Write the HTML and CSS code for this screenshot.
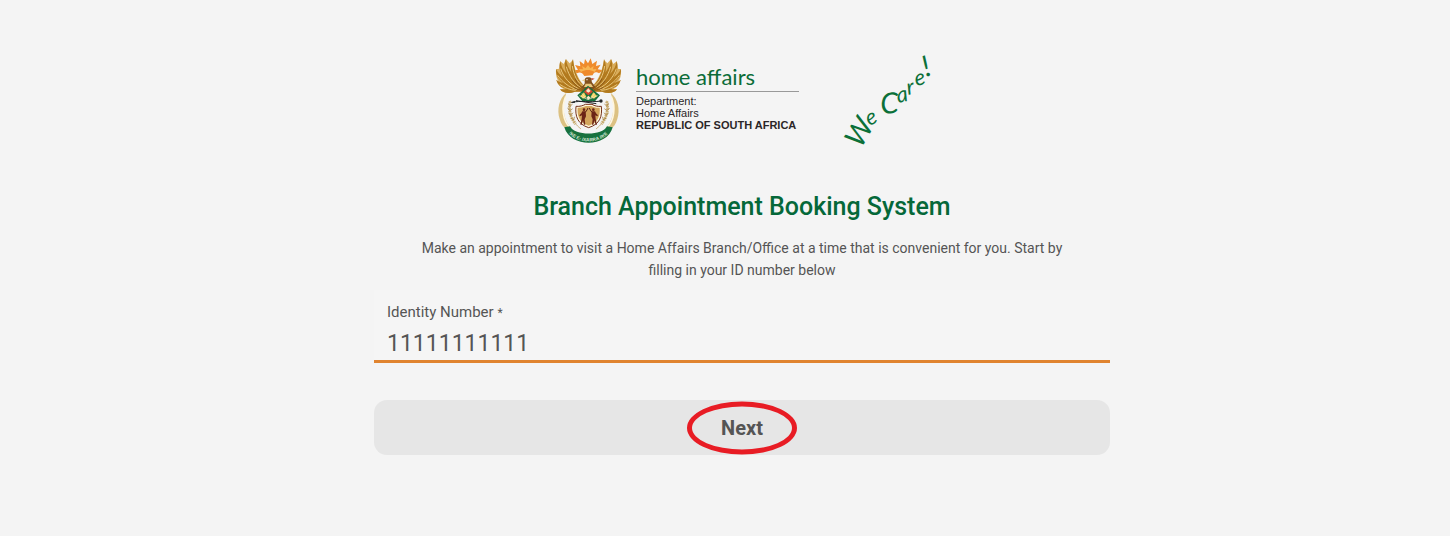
FILE: index.html
```html
<!DOCTYPE html>
<html lang="en">
  <head>
    <meta charset="UTF-8">
    <meta name="viewport" content="width=device-width, initial-scale=1">
    <title>Branch Appointment Booking System</title>
    <link rel="stylesheet" href="styles.css">
  </head>
  <body>
    <main class="booking">
      <header class="brand">
        <svg class="crest" viewBox="0 0 270 300" aria-hidden="true">
          <defs>
            <g id="side">
              <!-- wing -->
              <path fill="#d9ad5c" d="M122 110C106 98 92 74 84 30L74 40L63 28L56 42L46 34L42 56L33 58C32 78 36 90 44 97L34 90C38 104 46 112 56 116L45 118C54 131 74 131 90 125L116 124Z"/>
              <path fill="#b27a1e" d="M122 112C100 96 88 68 84 27C77 44 77 58 80 68C70 54 65 42 63 26C57 42 59 58 66 72C54 60 48 48 46 33C40 50 46 68 56 82C46 76 38 68 33 57C32 76 42 90 54 98C47 97 40 94 34 89C38 106 52 114 65 116C58 119 52 119 45 118C54 131 74 131 90 125L116 125Z"/>
              <path fill="none" stroke="#e9c77d" stroke-width="3" d="M82 48C86 76 98 98 114 108M64 50C72 80 90 102 106 112M47 56C56 84 76 104 100 116M38 76C52 96 72 112 96 119M44 103C60 114 76 120 92 121"/>
              <path fill="none" stroke="#8a5718" stroke-width="3" d="M90 86C97 101 106 110 118 117M80 92C90 106 102 114 116 120M86 112C96 118 104 120 114 121"/>
              <!-- tusk -->
              <path fill="#dcc182" d="M64 128C42 146 35 178 44 207C48 222 56 233 66 238L80 234C58 216 48 176 64 128Z"/>
              <path fill="none" stroke="#fff6df" stroke-width="5" d="M62 140C48 172 54 212 74 232"/>
              <!-- wheat -->
              <path fill="none" stroke="#b89550" stroke-width="2" d="M76 152C68 184 78 214 108 237"/>
              <path fill="none" stroke="#c9ad72" stroke-width="9" stroke-dasharray="5 2" d="M76 154C70 178 75 200 92 222"/>
              <path fill="none" stroke="#9b7436" stroke-width="2" d="M70 160L76 168L83 162M67 174L75 182L83 176M70 189L78 196L84 188M77 204L86 209L89 200"/>
            </g>
            <g id="figure">
              <circle cx="117" cy="179" r="4"/>
              <path d="M112 184H122L123 199L119 208L121 224H117L114 211L110 224H106L110 207L111 196L105 199L103 196L109 190Z"/>
              <path fill="none" stroke="#5b1c12" stroke-width="3" d="M121 187L126 180L129 174"/>
            </g>
            <path id="motto" d="M64 239C88 286 173 286 198 239"/>
          </defs>
          <!-- rising sun -->
          <path fill="#ef8b2c" d="M96 70L80 62L99 59L90 45L106 49L104 33L117 43L120 27L129 40L137 25L142 42L156 32L153 48L167 44L158 58L175 61L162 70C150 62 145 70 143 76L118 78C112 66 103 65 96 70Z"/>
          <path fill="#f7b552" d="M108 66L102 57L114 58L111 48L122 55L129 45L136 55L146 48L144 58L155 57L149 66C135 58 122 58 108 66Z"/>
          <use href="#side"/>
          <use href="#side" transform="matrix(-1 0 0 1 261 0)"/>
          <!-- bird -->
          <path fill="#83521e" d="M119 95C117 87 122 81 130 82C136 80 141 85 140 90C138 99 150 104 151 112L140 124H122L108 112C113 106 121 104 119 95Z"/>
          <path fill="#e9c77d" d="M120 88L110 91L120 94ZM122 101L138 101L144 111L117 111Z"/>
          <path fill="#c5402c" d="M139 84L149 86L140 91Z"/>
          <circle cx="126" cy="89" r="2" fill="#fff"/>
          <!-- protea -->
          <path fill="#17713e" d="M97 136L129 107L165 136L150 154H112Z"/>
          <path fill="#f3d15d" d="M106 138L117 127L124 140L114 146ZM156 138L145 127L137 140L147 146Z"/>
          <path fill="#d6452f" d="M117 125L130 112L144 125L130 136Z"/>
          <path fill="#f5eac7" d="M123 123L130 115L137 123L130 128ZM124 143L130 137L137 143L130 149Z"/>
          <path fill="none" stroke="#f5eac7" stroke-width="2" d="M103 137L129 149L158 137M111 130L121 144M149 130L139 144"/>
          <!-- spear and knobkierie -->
          <path fill="none" stroke="#222629" stroke-width="3" d="M80 157C108 151 132 158 169 153M93 152L154 161"/>
          <path fill="#222629" d="M76 158L91 152L89 159Z"/>
          <circle cx="168" cy="153" r="5" fill="#222629"/>
          <!-- shield -->
          <path fill="#fff8df" stroke="#74301a" stroke-width="3" d="M93 169C105 170 114 167 121 163H141C149 168 158 170 169 169C172 198 166 222 131 233C97 222 90 198 93 169Z"/>
          <path fill="#d3a55c" d="M98 173C111 174 117 169 123 168H139C147 172 155 174 164 173C166 197 160 217 131 227C103 217 96 197 98 173Z"/>
          <use href="#figure" fill="#6b2416"/>
          <use href="#figure" fill="#6b2416" transform="matrix(-1 0 0 1 262 0)"/>
          <!-- green base -->
          <path fill="#17713e" d="M58 232L75 229C89 258 172 258 186 229L203 232C188 293 76 295 58 232Z"/>
          <text class="motto"><textPath href="#motto" startOffset="8%">!KE E: /XARRA //KE</textPath></text>
        </svg>
        <div class="department">
          <div class="department-name">home affairs</div>
          <div>Department:</div>
          <div>Home Affairs</div>
          <strong>REPUBLIC OF SOUTH AFRICA</strong>
        </div>
        <svg class="slogan" viewBox="0 0 104 120" role="img" aria-label="We Care!">
          <text x="26 34" y="109 86" rotate="-60 -24"><tspan class="slogan-capital">W</tspan>e</text>
          <text x="46 63 73 81 91" y="74 63 55 46 37" rotate="-4 -12 -12 -12 -20"><tspan class="slogan-capital">C</tspan>are<tspan class="slogan-capital">!</tspan></text>
        </svg>
      </header>

      <h1 class="title">Branch Appointment Booking System</h1>
      <p class="intro">Make an appointment to visit a Home Affairs Branch/Office at a time that is convenient for you. Start by filling in your ID number below</p>

      <form class="form">
        <div class="field">
          <label for="identity">Identity Number <span class="required">*</span></label>
          <input id="identity" type="text" inputmode="numeric" value="11111111111" required>
        </div>
        <button class="next" type="button">Next<span class="highlight"></span></button>
      </form>
    </main>
  </body>
</html>
```
FILE: styles.css
```css
* {
  box-sizing: border-box;
}
body {
  margin: 0;
  padding: 40px 0 40px 34px;
  background-color: #f4f4f4;
  color: #555;
  font-family: Roboto, sans-serif;
}
.booking {
  max-width: 736px;
  margin: 0 auto;
}
.brand {
  display: flex;
  justify-content: center;
  align-items: center;
  height: 120px;
}
.crest {
  width: 90px;
  height: 100px;
}
.department {
  min-width: 163px;
  margin: 0 36px 0 1px;
  padding-bottom: 4px;
  color: #2b2627;
  font: 11px/12px "Liberation Sans", Arial, sans-serif;
}
.department-name {
  margin-bottom: 3px;
  padding-bottom: 2px;
  border-bottom: 1px solid #999;
  color: #0b6c38;
  font: 22px/24px Lato, sans-serif;
}
.slogan {
  width: 104px;
  height: 120px;
  fill: #0b7038;
  font: italic 22px Lato, sans-serif;
}
.slogan-capital {
  font-size: 29px;
}
.motto {
  fill: #d8ead9;
  font: bold 14px "Liberation Sans", sans-serif;
}
.title {
  margin: 31px 0 14px;
  color: #056839;
  font-size: 25px;
  font-weight: 500;
  line-height: 32px;
  text-align: center;
}
.intro {
  margin: 0;
  padding: 0 40px;
  font-size: 14px;
  line-height: 22px;
  text-align: center;
}
.form {
  margin-top: 9px;
}
.field {
  padding: 12px 13px 1px;
  border-bottom: 3px solid #e0842f;
  background-color: #f5f5f5;
}
.field label {
  display: block;
  font-size: 15px;
  line-height: 20px;
}
.required {
  font-size: 12px;
}
.field input {
  display: block;
  width: 100%;
  height: 32px;
  margin: 4px 0 0;
  padding: 0;
  border: none;
  outline: none;
  background: none;
  color: #555;
  font: 23px Roboto, sans-serif;
}
.next {
  position: relative;
  display: block;
  width: 100%;
  height: 55px;
  margin-top: 37px;
  border: none;
  border-radius: 13px;
  background-color: #e6e6e6;
  color: #555;
  font: bold 20px Roboto, sans-serif;
  cursor: pointer;
}
.highlight {
  position: absolute;
  top: 50%;
  left: 50%;
  width: 110px;
  height: 53px;
  border: 5px solid #e81c24;
  border-radius: 50%;
  transform: translate(-50%, -50%);
}
```
